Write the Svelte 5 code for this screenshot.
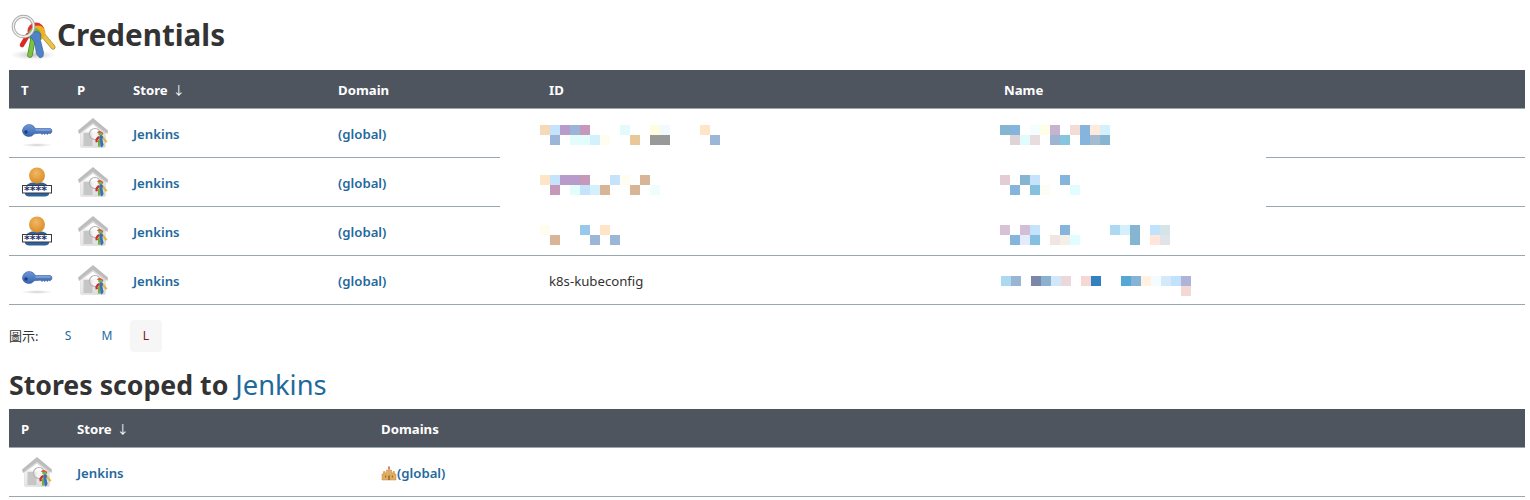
<script>
  const rows = [
    { icon: 'key', dy: 4, id: { top: [[0,'#f5d9b8'],[1,'#c5e3fb'],[2,'#b79ccb'],[3,'#9bb5d8'],[4,'#c699bb'],[8,'#e4fbfd'],[11,'#fefde0'],[12,'#f1fbff'],[16,'#ffe5c8']], bot: [[1,'#9cb6d8'],[3,'#e3fdfd'],[4,'#e3fdfd'],[5,'#d5f0fd'],[6,'#fefdf0'],[9,'#e8c898'],[11,'#999999'],[12,'#999999'],[17,'#9cb6d8']] },
      name: { top: [[0,'#85b5d0'],[1,'#85b5dd'],[3,'#f5feff'],[4,'#fefde8'],[5,'#c5b3d0'],[7,'#f3dcd5'],[8,'#85b5dd'],[9,'#ffeadc'],[10,'#d5f0fd']], bot: [[1,'#e0d3d8'],[2,'#e0fdfd'],[3,'#e8dcdf'],[5,'#9fb3d3'],[6,'#85c5de'],[8,'#85b5dd'],[9,'#a5bbd0'],[10,'#85b5d0']] } },
    { icon: 'user', dy: 6, id: { top: [[0,'#ffe5c8'],[1,'#c5e3fb'],[2,'#b79ccb'],[3,'#b79ccb'],[4,'#c699bb'],[7,'#c5e3fb'],[8,'#fefdf0'],[10,'#d8b596']], bot: [[1,'#c699bb'],[3,'#e3fdfd'],[4,'#c5e3fb'],[5,'#d5f0fd'],[6,'#d8b596'],[9,'#d8b596'],[11,'#f0fdff']] },
      name: { top: [[0,'#e3ccd3'],[2,'#85b5d0'],[3,'#c5e3fb'],[6,'#85b5dd']], bot: [[1,'#85b5dd'],[3,'#85c0e0'],[4,'#fefdf5'],[7,'#e0fdff']] } },
    { icon: 'user', dy: 8, id: { top: [[0,'#fefdf0'],[4,'#98c8ea'],[6,'#ffe5c8']], bot: [[1,'#d8b596'],[5,'#9cb6d8'],[7,'#9cb6d8']] },
      name: { top: [[0,'#d8c3d5'],[2,'#d3bfd5'],[3,'#c5e3fb'],[6,'#85b5dd'],[11,'#acd8f2'],[12,'#d5f0fd'],[13,'#85b5d0'],[15,'#c0e2fd'],[16,'#d3e5e8']], bot: [[1,'#85b5dd'],[2,'#e3ebfd'],[3,'#85c0e0'],[5,'#f0e5e0'],[6,'#f3f0ea'],[7,'#e0fdff'],[13,'#85b5d0'],[15,'#ffe5da'],[16,'#e0e3e8']] } },
    { icon: 'key', dy: 12, idText: 'k8s-kubeconfig',
      name: { top: [[0,'#acd8f2'],[1,'#9ab5d3'],[3,'#7a86aa'],[4,'#8cb0d0'],[5,'#d0e8f8'],[6,'#ecd8da'],[8,'#f5d8d3'],[9,'#3380c0'],[12,'#55a8d5'],[13,'#85b3d8'],[14,'#fff2e0'],[15,'#f3fdff'],[16,'#d5eaf8'],[17,'#c0e2fd'],[18,'#b0b3d8']], bot: [[18,'#f5d8d3']] }, nudge: true }
  ];
</script>

{#snippet keyIcon()}
  <svg class="icon" viewBox="0 0 32 32" width="32" height="32" aria-hidden="true">
    <defs>
      <radialGradient id="ks"><stop offset="0" stop-color="#9a9a9a" stop-opacity=".5"/><stop offset="1" stop-color="#bbb" stop-opacity="0"/></radialGradient>
      <linearGradient id="kb" x1="0" y1="0" x2="0" y2="1"><stop offset="0" stop-color="#6d96d6"/><stop offset="1" stop-color="#3565b2"/></linearGradient>
    </defs>
    <ellipse cx="16" cy="28" rx="16" ry="2" fill="url(#ks)"/>
    <path d="M1.500 15a6.700 6.700 0 0 1 12.800-3.500H29.500l1.300 1.300v2.400l-1.600 1.600-1.600-.6-1.300 1.400-1.400-1.400-1.300 1.400-1.300-1.400-1.300 1.400-1.400-1.400-6.300.6A6.700 6.700 0 0 1 1.500 15z" fill="url(#kb)" stroke="#2c5193" stroke-width=".5"/>
    <path d="M14.500 13h15" stroke="#a9c0e6" stroke-width=".9"/>
    <circle cx="5" cy="15" r="1.700" fill="#1f3b75"/>
  </svg>
{/snippet}

{#snippet userIcon()}
  <svg class="icon" viewBox="0 0 32 32" width="32" height="32" aria-hidden="true">
    <defs>
      <radialGradient id="uh" cx=".45" cy=".35" r=".7"><stop offset="0" stop-color="#f2b765"/><stop offset="1" stop-color="#d98a22"/></radialGradient>
    </defs>
    <path d="M4 22c1-4 6-6 12-6s11 2 12 6v6c0 1.500-2 2.500-4 2.500H8c-2 0-4-1-4-2.500z" fill="#2f619f"/>
    <circle cx="16" cy="9.500" r="8" fill="url(#uh)"/>
    <rect x="1.500" y="19.500" width="29" height="7.500" fill="#fff" stroke="#3a3a3a" stroke-width="1"/>
    <text x="14.500" y="28" class="stars">****</text>
  </svg>
{/snippet}

{#snippet houseIcon()}
  <svg class="icon" viewBox="0 0 32 32" width="32" height="32" aria-hidden="true">
    <defs>
      <linearGradient id="hw" x1="0" y1="0" x2="1" y2="1"><stop offset="0" stop-color="#f2f2f2"/><stop offset="1" stop-color="#d8d8d8"/></linearGradient>
    </defs>
    <path d="M3.500 15h25v14a1.500 1.500 0 0 1-1.500 1.500H5A1.500 1.500 0 0 1 3.500 29z" fill="url(#hw)" stroke="#dcdcdc" stroke-width=".6"/>
    <path d="M16 1 31 13.500l-.5 3.500L16 6.500 2 17l-1-3.500z" fill="#bdbdbd"/>
    <path d="M6 14 16 6.500 28 16" fill="none" stroke="#d5d5d5" stroke-width="1.500"/>
    <rect x="6.500" y="16" width="9" height="13" fill="#c6c6c6"/>
    <circle cx="18" cy="17" r="5.500" fill="#fff" fill-opacity=".6" stroke="#b0b0b0" stroke-width="1.200"/>
    <path d="M20 15.500a3.700 3.700 0 0 1 6.500 1.500l-2 1-3-1.500z" fill="#d9543f"/>
    <path d="M21 17a2.800 2.800 0 0 1 5 .5l-1.500 1.500-2.500-.5z" fill="#77b548"/>
    <path d="M26 19l4.500 5.500-1.800 1.500-4-5z" fill="#dcbc4a"/>
    <path d="M20 20l2-1 .8 1.500-2.300 3 .5 1.500-2.300.4-.4-2.400z" fill="#cf2f24"/>
    <path d="M21 23l2-1 .3 5-.8 3-1.500-.5z" fill="#6bb03d"/>
    <path d="M23 18.500c1.500-.8 3 0 3 1.500l-.6 2.500 1.200 5.500-1.700 2.500-1.500-1-.4-6-.8-2.500z" fill="#3a6fb5"/>
  </svg>
{/snippet}

{#snippet mosaic(m, dy, cls)}
  <div class="mosaic {cls}" style:margin-top="{dy}px">
    {#each m.top as [c, color]}
      <i style:grid-column={c + 1} style:grid-row="1" style:background={color}></i>
    {/each}
    {#each m.bot as [c, color]}
      <i style:grid-column={c + 1} style:grid-row="2" style:background={color}></i>
    {/each}
  </div>
{/snippet}

<main class="page">
  <header class="title">
    <svg class="keys" viewBox="0 0 48 48" width="48" height="48" aria-hidden="true">
      <defs>
        <radialGradient id="ts"><stop offset="0" stop-color="#8f8f8f" stop-opacity=".55"/><stop offset="1" stop-color="#bbb" stop-opacity="0"/></radialGradient>
      </defs>
      <ellipse cx="24" cy="41" rx="23" ry="5" fill="url(#ts)"/>
      <path d="M33 20 44 33" stroke="#a98b23" stroke-width="5" stroke-linecap="round"/>
      <path d="M33 20 44 33" stroke="#e6c34a" stroke-width="3.600" stroke-linecap="round"/>
      <path d="M19 21 13 31" stroke="#d92b25" stroke-width="4.500" stroke-linecap="round"/>
      <circle cx="27" cy="17" r="8.500" fill="#e0332e"/>
      <circle cx="29" cy="19" r="7.500" fill="#f0b11e"/>
      <circle cx="25.500" cy="20.500" r="6.500" fill="#6fb542"/>
      <path d="M24 25 21 41" stroke="#4b8b26" stroke-width="5.500" stroke-linecap="round"/>
      <path d="M24 25 21 41" stroke="#7cc244" stroke-width="4" stroke-linecap="round"/>
      <path d="M21.500 23a5.600 5.600 0 0 1 10.500-2.500l-.5 6 3 12-.5 4-3 1.500-3.500-4-2-12z" fill="#4f82c6" stroke="#2f5d9e" stroke-width=".6"/>
      <circle cx="14.500" cy="12.500" r="10.200" fill="none" stroke="#a9a9a9" stroke-width="3.200"/>
      <circle cx="14.500" cy="12.500" r="10.200" fill="none" stroke="#f0f0f0" stroke-width="1.300"/>
    </svg>
    <h1>Credentials</h1>
  </header>

  <div class="table-wrap">
    <table>
      <colgroup><col style="width:56px"/><col style="width:56px"/><col style="width:205px"/><col style="width:211px"/><col style="width:455px"/><col/></colgroup>
      <thead>
        <tr><th>T</th><th>P</th><th>Store<span class="arrow">↓</span></th><th>Domain</th><th>ID</th><th>Name</th></tr>
      </thead>
      <tbody>
        {#each rows as r}
          <tr>
            <td>{#if r.icon === 'key'}{@render keyIcon()}{:else}{@render userIcon()}{/if}</td>
            <td>{@render houseIcon()}</td>
            <td><a class="cell" href="#s">Jenkins</a></td>
            <td><a class="cell" href="#d">(global)</a></td>
            <td>{#if r.idText}<span class="cell">{r.idText}</span>{:else}{@render mosaic(r.id, r.dy, 'id')}{/if}</td>
            <td>{@render mosaic(r.name, r.dy, r.nudge ? 'nudge' : 'name')}</td>
          </tr>
        {/each}
      </tbody>
    </table>
    <div class="mask m1"></div>
    <div class="mask m2"></div>
  </div>

  <div class="sizes">
    <span class="label">圖示:</span>
    <a href="#small" class="size">S</a>
    <a href="#medium" class="size">M</a>
    <span class="size on">L</span>
  </div>

  <h2>Stores scoped to <a href="#j">Jenkins</a></h2>

  <table>
    <colgroup><col style="width:56px"/><col style="width:304px"/><col/></colgroup>
    <thead>
      <tr><th>P</th><th>Store<span class="arrow">↓</span></th><th>Domains</th></tr>
    </thead>
    <tbody>
      <tr>
        <td>{@render houseIcon()}</td>
        <td><a class="cell" href="#s">Jenkins</a></td>
        <td>
          <a href="#d" class="cell domain">
            <svg viewBox="0 0 16 16" width="16" height="16" aria-hidden="true">
              <path d="M8 1.500v3" stroke="#c9453a" stroke-width="1.400"/>
              <path d="M5.500 5h5v3H12V6.500h1.500V9H15v6H1V9h1.500V6.500H4V8h1.500z" fill="#e0ad63" stroke="#bd8a42" stroke-width=".5"/>
              <path d="M4 10.500h1.200v2H4zM10.800 10.500H12v2h-1.200zM7.200 10.500h1.600V15H7.200z" fill="#9a6c2c"/>
            </svg>(global)
          </a>
        </td>
      </tr>
    </tbody>
  </table>
</main>

<style>
  :global(body) {
    margin: 0;
    background: #fff;
    color: #333;
    font-family: "Noto Sans", "Noto Sans CJK TC", sans-serif;
    font-size: 13.2px;
  }
  .page {
    padding: 0 5px 0 9px;
  }
  .title {
    display: flex;
    align-items: center;
    height: 70px;
  }
  .keys {
    margin-top: 6px;
    flex: none;
  }
  h1 {
    margin: 0;
    font-size: 29.6px;
    line-height: 40px;
    font-weight: 700;
    color: #333;
  }
  .table-wrap {
    position: relative;
  }
  table {
    width: 100%;
    table-layout: fixed;
    border-collapse: collapse;
  }
  th {
    height: 38px;
    padding: 2px 12px 0;
    background: #4f555f;
    border-bottom: 1px solid #9ba7af;
    color: #fff;
    font-size: 13.2px;
    font-weight: 700;
    text-align: left;
    box-sizing: border-box;
  }
  .arrow {
    margin-left: 5px;
    font-size: 12px;
    font-weight: 400;
  }
  td {
    height: 49px;
    padding: 0 12px;
    border-bottom: 1px solid #9ba7af;
    box-sizing: border-box;
    vertical-align: middle;
  }
  a {
    color: #1f6a9c;
    text-decoration: none;
  }
  .cell {
    display: block;
    padding-top: 2px;
  }
  a.cell {
    font-weight: 600;
  }
  .icon {
    display: block;
  }
  .stars {
    font-family: "DejaVu Sans", sans-serif;
    font-size: 11px;
    font-weight: 700;
    text-anchor: middle;
    fill: #26316f;
  }
  .mosaic {
    display: grid;
    grid-template-columns: repeat(auto-fill, 10px);
    grid-template-rows: 10px 10px;
    width: 300px;
  }
  .mosaic.id {
    margin-left: -9px;
  }
  .mosaic.name {
    margin-left: -4px;
  }
  .mosaic.nudge {
    margin-left: -3px;
  }
  .mosaic i {
    display: block;
  }
  .mask {
    position: absolute;
    left: 491px;
    width: 766px;
    height: 2px;
    background: #fff;
  }
  .m1 { top: 87px; }
  .m2 { top: 136px; }
  .sizes {
    display: flex;
    align-items: center;
    gap: 7px;
    height: 32px;
    margin-top: 15px;
    font-size: 12px;
  }
  .label {
    width: 36px;
    font-size: 13px;
  }
  .size {
    width: 32px;
    height: 32px;
    display: flex;
    align-items: center;
    justify-content: center;
    border-radius: 4px;
  }
  .size.on {
    background: #f6f6f6;
    color: #7d1d1d;
  }
  h2 {
    margin: 0;
    padding: 15px 0 6.5px;
    font-size: 26.7px;
    line-height: 36px;
    font-weight: 700;
    color: #333;
  }
  h2 a {
    font-size: 27.3px;
    font-weight: 400;
  }
  .domain {
    display: flex;
    align-items: center;
  }
</style>
